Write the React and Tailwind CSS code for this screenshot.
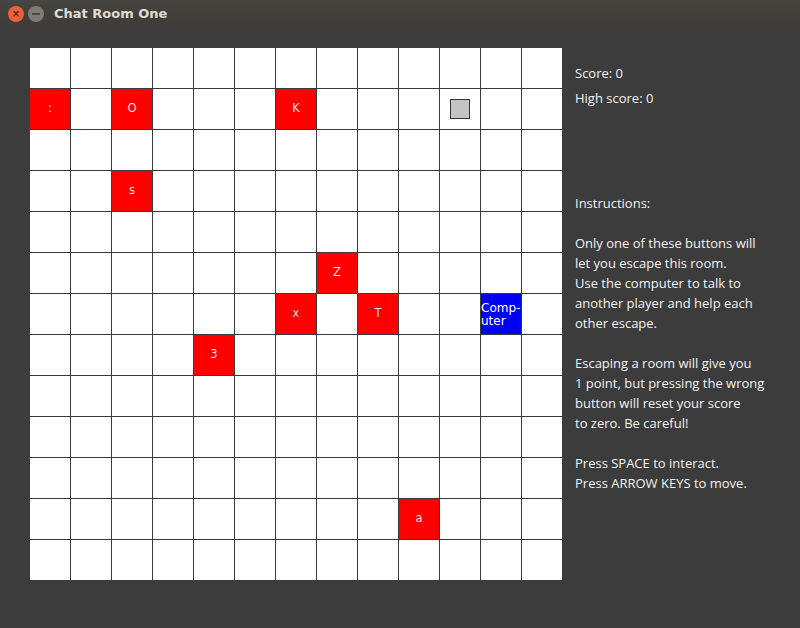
const SIZE = 13;

const items = {
  '1-0': { label: ':', kind: 'red' },
  '1-2': { label: 'O', kind: 'red' },
  '1-6': { label: 'K', kind: 'red' },
  '1-10': { kind: 'box' },
  '3-2': { label: 's', kind: 'red' },
  '5-7': { label: 'Z', kind: 'red' },
  '6-6': { label: 'x', kind: 'red' },
  '6-8': { label: 'T', kind: 'red' },
  '6-11': { kind: 'computer' },
  '7-4': { label: '3', kind: 'red' },
  '11-9': { label: 'a', kind: 'red' },
};

const Cell = ({ item }) => {
  if (!item) return <div className="w-[40px] h-[40px] bg-white" />;
  if (item.kind === 'box')
    return (
      <div className="w-[40px] h-[40px] bg-white flex items-center justify-center">
        <div className="w-[20px] h-[20px] bg-[#c4c4c4] border border-[#333]" />
      </div>
    );
  if (item.kind === 'computer')
    return (
      <div className="w-[40px] h-[40px] bg-[#0000f2] text-white text-[12px] leading-[13px] pt-[8px] font-['DejaVu_Sans',sans-serif] overflow-hidden">
        <div>Comp-</div>
        <div>uter</div>
      </div>
    );
  return (
    <div className="w-[40px] h-[40px] bg-[#ff0000] flex items-center justify-center text-[11.5px] text-[#ffdede] font-['DejaVu_Sans',sans-serif]">
      {item.label}
    </div>
  );
};

export default function App() {
  const rows = [];
  for (let r = 0; r < SIZE; r++) {
    for (let c = 0; c < SIZE; c++) {
      rows.push(<Cell key={r + '-' + c} item={items[r + '-' + c]} />);
    }
  }

  return (
    <div className="w-[800px] h-[628px] bg-[#3c3c3c] flex flex-col overflow-hidden">
      <div className="h-[28px] bg-gradient-to-b from-[#46453f] to-[#3c3b37] flex items-center pl-[8px]">
        <div className="w-[16px] h-[16px] rounded-full bg-[#e9603a] flex items-center justify-center text-[#6b2414] text-[10px] leading-none font-bold font-['DejaVu_Sans',sans-serif]">
          ×
        </div>
        <div className="w-[16px] h-[16px] rounded-full bg-[#7c7b76] ml-[4px] flex items-center justify-center">
          <div className="w-[8px] h-[2px] bg-[#4a4944]" />
        </div>
        <div className="ml-[10px] text-[13px] font-bold text-[#dfdbd2] font-['DejaVu_Sans',sans-serif]">
          Chat Room One
        </div>
      </div>

      <div className="flex pt-[20px] pl-[30px]">
        <div className="grid grid-cols-[repeat(13,40px)] gap-px bg-[#3a3a3a] w-[532px] h-[532px]">
          {rows}
        </div>

        <div className="ml-[13px] pt-[15px] text-[13px] leading-[20px] text-[#f2f2f2] font-['Open_Sans',sans-serif]">
          <div>Score: 0</div>
          <div className="mt-[5px]">High score: 0</div>
          <div className="mt-[85px]">Instructions:</div>
          <div className="mt-[20px]">Only one of these buttons will</div>
          <div>let you escape this room.</div>
          <div>Use the computer to talk to</div>
          <div>another player and help each</div>
          <div>other escape.</div>
          <div className="mt-[20px]">Escaping a room will give you</div>
          <div>1 point, but pressing the wrong</div>
          <div>button will reset your score</div>
          <div>to zero. Be careful!</div>
          <div className="mt-[20px]">Press SPACE to interact.</div>
          <div>Press ARROW KEYS to move.</div>
        </div>
      </div>
    </div>
  );
}
